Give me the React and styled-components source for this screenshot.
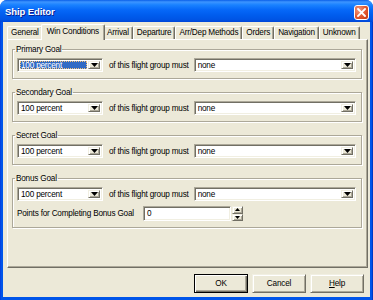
import React from "react";
import styled, { createGlobalStyle } from "styled-components";

const GlobalStyle = createGlobalStyle`
  html, body {
    margin: 0;
    padding: 0;
    background: #ffffff;
  }
  body {
    font-family: "Liberation Sans", Arial, sans-serif;
  }
`;

const goals = ["Primary Goal", "Secondary Goal", "Secret Goal", "Bonus Goal"];
const tabs = [
  "General",
  "Win Conditions",
  "Arrival",
  "Departure",
  "Arr/Dep Methods",
  "Orders",
  "Navigation",
  "Unknown",
];

const Arrow = ({ up }) => (
  <svg width="5" height="3" viewBox="0 0 5 3">
    <path d={up ? "M2.5 0 L5 3 L0 3 Z" : "M0 0 L5 0 L2.5 3 Z"} fill="#000" />
  </svg>
);

const Combo = ({ value, width, selected }) => (
  <ComboBox $width={width}>
    <ComboText $selected={selected}>{value}</ComboText>
    <DropButton>
      <svg width="7" height="4" viewBox="0 0 7 4">
        <path d="M0 0 L7 0 L3.5 4 Z" fill="#000" />
      </svg>
    </DropButton>
  </ComboBox>
);

const App = () => {
  return (
    <>
      <GlobalStyle />
      <Window>
        <TitleBar>
          <Title>Ship Editor</Title>
          <CloseButton>
            <svg width="9" height="9" viewBox="0 0 9 9">
              <path
                d="M1 1 L8 8 M8 1 L1 8"
                stroke="#fff"
                strokeWidth="1.8"
                strokeLinecap="square"
              />
            </svg>
          </CloseButton>
        </TitleBar>
        <Body>
          <TabStrip>
            {tabs.map((t) => (
              <Tab key={t} $active={t === "Win Conditions"}>
                {t}
              </Tab>
            ))}
          </TabStrip>
          <Panel>
            {goals.map((g, i) => (
              <Group key={g}>
                <Legend>{g}</Legend>
                <Row>
                  <Combo value="100 percent" width={86} selected={i === 0} />
                  <Label>of this flight group must</Label>
                  <Combo value="none" />
                </Row>
                {g === "Bonus Goal" && (
                  <Row $top={5}>
                    <PointsLabel>Points for Completing Bonus Goal</PointsLabel>
                    <Edit>0</Edit>
                    <Spinner>
                      <SpinButton>
                        <Arrow up />
                      </SpinButton>
                      <SpinButton>
                        <Arrow />
                      </SpinButton>
                    </Spinner>
                  </Row>
                )}
              </Group>
            ))}
          </Panel>
          <ButtonRow>
            <Button $default>OK</Button>
            <Button>Cancel</Button>
            <Button>
              <u>H</u>elp
            </Button>
          </ButtonRow>
        </Body>
      </Window>
    </>
  );
};

const Window = styled.div`
  width: 373px;
  height: 300px;
  display: flex;
  flex-direction: column;
  background: linear-gradient(90deg, #0831d9 0px, #0055ea 1px, #0055ea 372px, #001ea0 373px);
  border-radius: 7px 7px 0 0;
  overflow: hidden;
  box-sizing: border-box;
  font-size: 8.2px;
  letter-spacing: -0.2px;
  color: #000;
`;

const TitleBar = styled.div`
  flex: none;
  height: 22px;
  display: flex;
  align-items: center;
  justify-content: space-between;
  padding: 0 4px 0 5px;
  background: linear-gradient(
    180deg,
    #0a5fe8 0%,
    #3d95ff 9%,
    #1a82ff 22%,
    #0668f8 45%,
    #005ced 70%,
    #0055e5 88%,
    #0046d8 100%
  );
`;

const Title = styled.span`
  color: #fff;
  font-weight: bold;
  font-size: 9.5px;
  letter-spacing: -0.1px;
  text-shadow: 1px 1px #0a1e8e;
  padding-top: 1px;
`;

const CloseButton = styled.div`
  width: 15px;
  height: 15px;
  box-sizing: border-box;
  border: 1px solid #fff;
  border-radius: 3px;
  background: radial-gradient(circle at 30% 30%, #f09a80 0%, #e0562f 55%, #c23a12 100%);
  display: flex;
  align-items: center;
  justify-content: center;
  margin-top: 2px;
`;

const Body = styled.div`
  flex: 1;
  margin: 0 3px 3px 3px;
  background: #ece9d8;
  display: flex;
  flex-direction: column;
  padding: 2px 2px 0 4px;
`;

const TabStrip = styled.div`
  flex: none;
  height: 15px;
  display: flex;
  align-items: flex-end;
  position: relative;
  z-index: 1;
`;

const Tab = styled.div`
  box-sizing: border-box;
  height: ${(p) => (p.$active ? "16px" : "13px")};
  margin: ${(p) => (p.$active ? "0 -2px -1px -2px" : "0")};
  padding: ${(p) => (p.$active ? "2px 5px 0 5px" : "1px 3px 0 3px")};
  border-top: 1px solid #fff;
  border-left: 1px solid #fff;
  border-right: 1px solid #716f64;
  box-shadow: inset -1px 0 #aca899;
  border-radius: 2px 2px 0 0;
  background: #ece9d8;
  white-space: nowrap;
  line-height: 10px;
  position: relative;
  z-index: ${(p) => (p.$active ? 2 : 0)};
`;

const Panel = styled.div`
  flex: none;
  height: 229px;
  box-sizing: border-box;
  border-top: 1px solid #fff;
  border-left: 1px solid #fff;
  border-right: 1px solid #716f64;
  border-bottom: 1px solid #716f64;
  box-shadow: inset -1px -1px #aca899;
  padding: 4px 5px 0 4px;
  display: flex;
  flex-direction: column;
  gap: 8px;
`;

const Group = styled.fieldset`
  margin: 0;
  padding: 3px 5px 6px 4px;
  border: 1px solid #aca899;
  box-shadow: inset 1px 1px #fff, 1px 1px #fff;
  min-width: 0;
`;

const Legend = styled.legend`
  padding: 0 1px;
  margin-left: -2px;
  line-height: 11px;
`;

const Row = styled.div`
  display: flex;
  align-items: center;
  margin-top: ${(p) => (p.$top || 0)}px;
`;

const Label = styled.span`
  margin: 0 5px 0 6px;
  white-space: nowrap;
`;

const PointsLabel = styled.span`
  width: 126px;
  white-space: nowrap;
`;

const sunken = `
  box-sizing: border-box;
  background: #fff;
  border-top: 1px solid #aca899;
  border-left: 1px solid #aca899;
  border-right: 1px solid #fff;
  border-bottom: 1px solid #fff;
  box-shadow: inset 1px 1px #716f64, inset -1px -1px #f1efe2;
`;

const ComboBox = styled.div`
  ${sunken}
  height: 14px;
  width: ${(p) => (p.$width ? `${p.$width}px` : "auto")};
  flex: ${(p) => (p.$width ? "none" : 1)};
  display: flex;
  align-items: stretch;
  padding: 2px;
`;

const ComboText = styled.div`
  flex: 1;
  line-height: 10px;
  padding-left: 1px;
  margin-right: 1px;
  white-space: nowrap;
  color: ${(p) => (p.$selected ? "#ffffff" : "#000000")};
  background: ${(p) => (p.$selected ? "#316ac5" : "transparent")};
  outline: ${(p) => (p.$selected ? "1px dotted #f5c27a" : "none")};
  outline-offset: -1px;
`;

const raised = `
  box-sizing: border-box;
  background: #ece9d8;
  border-top: 1px solid #f1efe2;
  border-left: 1px solid #f1efe2;
  border-right: 1px solid #716f64;
  border-bottom: 1px solid #716f64;
  box-shadow: inset 1px 1px #fff, inset -1px -1px #aca899;
`;

const DropButton = styled.div`
  ${raised}
  width: 12px;
  display: flex;
  align-items: center;
  justify-content: center;
`;

const Edit = styled.div`
  ${sunken}
  width: 88px;
  height: 15px;
  padding: 2px 3px;
  line-height: 10px;
`;

const Spinner = styled.div`
  display: flex;
  flex-direction: column;
  width: 11px;
  height: 15px;
  margin-left: 1px;
`;

const SpinButton = styled.div`
  ${raised}
  flex: 1;
  display: flex;
  align-items: center;
  justify-content: center;
`;

const ButtonRow = styled.div`
  flex: none;
  display: flex;
  justify-content: flex-end;
  gap: 4px;
  padding: 6px 4px 0 0;
`;

const Button = styled.div`
  ${raised}
  width: 54px;
  height: 19px;
  display: flex;
  align-items: center;
  justify-content: center;
  ${(p) =>
    p.$default &&
    `
    border: 1px solid #000;
    box-shadow: inset 1px 1px #fff, inset -1px -1px #716f64, inset -2px -2px #aca899;
  `}
`;

export default App;
